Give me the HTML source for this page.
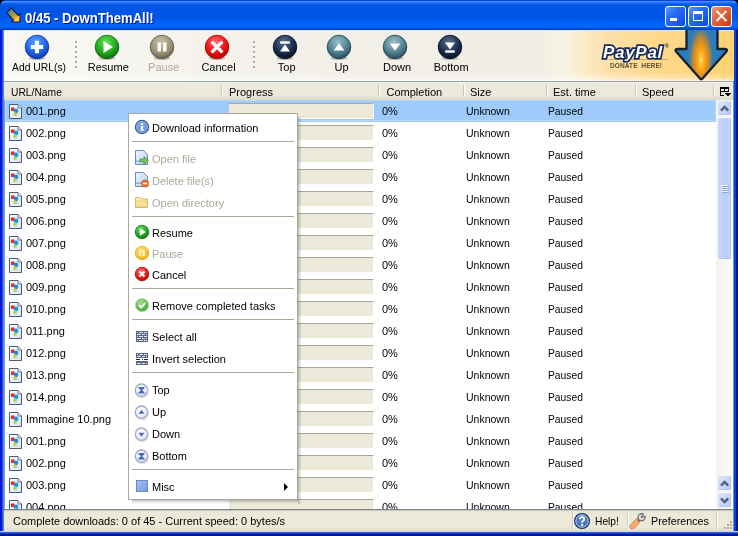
<!DOCTYPE html>
<html><head><meta charset="utf-8">
<style>
*{margin:0;padding:0;box-sizing:border-box}
html,body{width:738px;height:536px;overflow:hidden;background:#000818}
body{position:relative;will-change:transform;font-family:"Liberation Sans",sans-serif;font-size:11px;color:#000;line-height:13px}
.a{position:absolute}
svg{position:absolute;overflow:visible}
#title{left:0;top:0;width:738px;height:30px;border-radius:6px 6px 0 0;
 background:linear-gradient(#0A46D8 0px,#0A46D8 1px,#3C8CFF 1px,#3A88FC 2px,#1C6EF2 3px,#0A5CE8 4px,#0055E5 6px,#0054E3 12px,#0058EA 18px,#0062F8 23px,#0066FE 26px,#005AEE 28px,#0044CC 29px,#003AB8 30px)}
#ttext{left:25px;top:10px;color:#fff;font-weight:bold;font-size:14px;line-height:16px;transform:scaleX(0.935);transform-origin:0 0;white-space:nowrap;text-shadow:1px 1px 0 #0A1883}
#lb{left:0;top:30px;width:4px;height:506px;background:linear-gradient(90deg,#0018D0 0,#0018D0 2px,#2458F8 2px,#2458F8 3px,#5A80C8 3px)}
#rb{left:733px;top:30px;width:5px;height:506px;background:linear-gradient(90deg,#7090C8 0,#7090C8 1px,#0840D8 1px,#0840D8 3px,#001890 3px)}
#bb{left:0;top:531px;width:738px;height:5px;background:linear-gradient(#C8D4F0 0,#C8D4F0 1px,#3060D0 1px,#3060D0 2px,#0840D8 2px,#0840D8 3px,#001890 3px)}
#toolbar{left:4px;top:30px;width:730px;height:51px;background:linear-gradient(90deg,#F9F8F3 0px,#F2F0E8 300px,#EFEDE4 536px,#F8F4E4 561px,#FBE8C0 586px,#FCDFA8 606px,#FFD98C 650px,#FFD47C 700px,#FFD070 730px)}
#tbshade{left:4px;top:72px;width:729px;height:9px;background:linear-gradient(rgba(255,255,255,0),rgba(255,255,255,0.35) 7px,rgba(255,255,255,0.7) 8px)}
#tbline{left:4px;top:81px;width:729px;height:1px;background:#97A0A8}
.tl{top:61px;white-space:nowrap;text-align:center;width:80px;margin-left:-40px}
.dis{color:#ACA899}
.sep{left:0;top:41px;width:2px;height:28px;background:repeating-linear-gradient(#A8A8A4 0 2px,#FFFFFF 2px 3px,transparent 3px 5px)}
#header{left:4px;top:82px;width:729px;height:18px;background:linear-gradient(#F2F3EA 0,#F2F3EA 1px,#EBE9DB 1px,#EBE9DB 13px,#E6E3D3 15px,#E0DCCB 17px,#DCD8C6 18px)}
.hs{top:85px;width:2px;height:11px;border-left:1px solid #C7C5B2;border-right:1px solid #fff}
.ht{top:86px;white-space:nowrap}
#tree{left:4px;top:100px;width:712px;height:409px;background:#fff;overflow:hidden;border-left:1px solid #7F9DB9}
.row{position:absolute;left:0;width:712px;height:22px}
.row .t{position:absolute;top:5px;white-space:nowrap}
.sel{background:#9FCBFA}
.foc{position:absolute;left:0;top:0;width:711px;height:21px;border:1px dotted rgba(255,255,255,0.5)}
.pb{position:absolute;left:224px;top:3px;width:145px;height:16px;background:#ECE9D8;border-top:1px solid #ACA899;border-right:1px solid #fff;border-bottom:1px solid #fff}
#status{left:4px;top:509px;width:729px;height:22px;background:linear-gradient(#7A8288 0,#7A8288 1px,#C8C8BE 1px,#C8C8BE 2px,#E8E6D8 2px,#ECE9D8 6px,#ECE9D8 18px,#E2DDC6 22px)}
#sbar{left:716px;top:100px;width:17px;height:409px;background:linear-gradient(90deg,#F3F1EC,#FEFEFB)}
.sbtn{position:absolute;left:718px;width:13px;border-radius:2px;background:linear-gradient(135deg,#DCE6FE,#C6D5FB 60%,#B9CAF6);box-shadow:inset -1px -1px 0 #B0C2EE, 0 0 0 1px #F6F8FE}
#menu{left:128px;top:113px;width:170px;height:387px;background:#fff;border:1px solid #ACA899}
.msh{background:rgba(0,0,0,0.14)}
.mi{left:152px;white-space:nowrap}
.ms{left:132px;width:162px;height:1px;background:#ACA899}
.wb{position:absolute;top:6px;width:21px;height:21px;border:1px solid #fff;border-radius:3px}
</style></head><body>
<div id="title" class="a"></div>
<svg style="left:0;top:0" width="30" height="30" viewBox="0 0 30 30">
<defs><linearGradient id="tig" gradientUnits="userSpaceOnUse" x1="8" y1="10" x2="19" y2="21"><stop offset="0" stop-color="#2E86B8"/><stop offset="0.45" stop-color="#A89A48"/><stop offset="0.7" stop-color="#F4A020"/><stop offset="0.85" stop-color="#FFD060"/><stop offset="1" stop-color="#F8A830"/></linearGradient></defs>
<path d="M11.33 8.07 L18.13 15.47 L20 13.6 L20 22 L11.6 22 L13.47 20.13 L6.67 12.73 Z" fill="url(#tig)" stroke="#0A1E48" stroke-width="1.1" stroke-linejoin="miter"/>
</svg>
<div class="wb" style="left:665px;background:linear-gradient(135deg,#5A9AFF 0%,#2A6EF8 35%,#1A5AF0 70%,#1048D8 100%)"></div>
<div class="a" style="left:670px;top:18px;width:7px;height:3px;background:#fff"></div>
<div class="wb" style="left:688px;background:linear-gradient(135deg,#5A9AFF 0%,#2A6EF8 35%,#1A5AF0 70%,#1048D8 100%)"></div>
<div class="a" style="left:693px;top:11px;width:10px;height:10px;border:1px solid #fff;border-top-width:3px"></div>
<div class="wb" style="left:711px;background:linear-gradient(135deg,#F09878 0%,#E06840 40%,#D04E20 75%,#B83A10 100%)"></div>
<svg style="left:715px;top:10px" width="13" height="12" viewBox="0 0 13 12"><path d="M1.5 1 L11.5 11 M11.5 1 L1.5 11" stroke="#fff" stroke-width="1.8"/></svg>
<div id="ttext" class="a">0/45 - DownThemAll!</div>
<div id="lb" class="a"></div>
<div id="rb" class="a"></div>
<div id="toolbar" class="a"></div>
<div id="tbshade" class="a"></div>
<div class="a" style="left:4px;top:30px;width:729px;height:1px;background:#E4EAF6"></div>
<div class="a" style="left:603px;top:43px;font:italic bold 17px/20px 'Liberation Sans',sans-serif;color:#fff;-webkit-text-stroke:3.4px #15285A;paint-order:stroke fill;letter-spacing:0.7px;white-space:nowrap">PayPal</div>
<div class="a" style="left:665px;top:43px;font:bold 5px/6px 'Liberation Sans',sans-serif;color:#15285A">®</div>
<div class="a" style="left:609px;top:59px;width:59px;height:1px;background:rgba(120,100,60,0.4)"></div>
<div class="a" style="left:610px;top:62px;font:bold 6.5px/8px 'Liberation Sans',sans-serif;color:#5E5036;white-space:nowrap;letter-spacing:0.1px">DONATE&nbsp; HERE!</div>
<svg style="left:670px;top:30px;overflow:hidden" width="63" height="51" viewBox="0 0 63 51">
<defs><radialGradient id="arr" cx="31" cy="30" r="40" gradientUnits="userSpaceOnUse" gradientTransform="translate(31 30) scale(0.36 1) translate(-31 -30)">
<stop offset="0" stop-color="#FFF8B0"/><stop offset="0.08" stop-color="#FFC838"/><stop offset="0.3" stop-color="#F89C14"/><stop offset="0.55" stop-color="#C08A30"/><stop offset="0.8" stop-color="#3C7CA8"/><stop offset="1" stop-color="#2A7CC0"/></radialGradient></defs>
<path d="M16.5 -3 H47.5 V19 H55 Q58.5 19 56 22 L32.5 48.5 Q31.2 50 30 48.5 L6.5 22 Q4 19 7.5 19 H16.5 Z" fill="url(#arr)" stroke="#15202A" stroke-width="2.3" stroke-linejoin="round"/>
</svg>
<div class="a sep" style="left:74.5px"></div>
<div class="a sep" style="left:253px"></div>
<svg style="left:22.5px;top:32.5px" width="28" height="28" viewBox="0 0 28 28">
<defs><radialGradient id="gadd" cx="0.45" cy="0.3" r="0.75"><stop offset="0" stop-color="#5AA8FF"/><stop offset="0.6" stop-color="#1E64E6"/><stop offset="1" stop-color="#0A2E9C"/></radialGradient></defs>
<ellipse cx="14" cy="25.3" rx="8.5" ry="1.8" fill="rgba(0,0,0,0.22)"/><circle cx="14" cy="14" r="11.8" fill="url(#gadd)" stroke="#0A2E9C" stroke-width="0.8"/>
<path d="M12 7.8h4v4.2h4.2v4h-4.2v4.2h-4v-4.2h-4.2v-4h4.2z" fill="#fff"/></svg>
<svg style="left:93px;top:32.5px" width="28" height="28" viewBox="0 0 28 28">
<defs><radialGradient id="gres" cx="0.45" cy="0.3" r="0.75"><stop offset="0" stop-color="#62E25A"/><stop offset="0.6" stop-color="#1FA91B"/><stop offset="1" stop-color="#0C5E0A"/></radialGradient></defs>
<ellipse cx="14" cy="25.3" rx="8.5" ry="1.8" fill="rgba(0,0,0,0.22)"/><circle cx="14" cy="14" r="11.8" fill="url(#gres)" stroke="#0C5E0A" stroke-width="0.8"/>
<path d="M10.5 8 L20 14 L10.5 20 Z" fill="#fff"/></svg>
<svg style="left:148px;top:32.5px" width="28" height="28" viewBox="0 0 28 28">
<defs><radialGradient id="gpau" cx="0.45" cy="0.3" r="0.75"><stop offset="0" stop-color="#C9C0A8"/><stop offset="0.6" stop-color="#9C927A"/><stop offset="1" stop-color="#5E5644"/></radialGradient></defs>
<ellipse cx="14" cy="25.3" rx="8.5" ry="1.8" fill="rgba(0,0,0,0.22)"/><circle cx="14" cy="14" r="11.8" fill="url(#gpau)" stroke="#5E5644" stroke-width="0.8"/>
<rect x="9.6" y="9.5" width="3.3" height="9" fill="#fff"/><rect x="15.1" y="9.5" width="3.3" height="9" fill="#fff"/></svg>
<svg style="left:203px;top:32.5px" width="28" height="28" viewBox="0 0 28 28">
<defs><radialGradient id="gcan" cx="0.45" cy="0.3" r="0.75"><stop offset="0" stop-color="#FF7070"/><stop offset="0.6" stop-color="#F01010"/><stop offset="1" stop-color="#A00000"/></radialGradient></defs>
<ellipse cx="14" cy="25.3" rx="8.5" ry="1.8" fill="rgba(0,0,0,0.22)"/><circle cx="14" cy="14" r="11.8" fill="url(#gcan)" stroke="#A00000" stroke-width="0.8"/>
<path d="M6.4 14 L21.6 14 M14 6.4 L14 21.6" stroke="#fff" stroke-width="3.2" transform="rotate(45 14 14)"/></svg>
<svg style="left:270.6px;top:32.5px" width="28" height="28" viewBox="0 0 28 28">
<defs><radialGradient id="gtop" cx="0.45" cy="0.3" r="0.75"><stop offset="0" stop-color="#5C7090"/><stop offset="0.6" stop-color="#1A2C4C"/><stop offset="1" stop-color="#050D1E"/></radialGradient></defs>
<ellipse cx="14" cy="25.3" rx="8.5" ry="1.8" fill="rgba(0,0,0,0.22)"/><circle cx="14" cy="14" r="11.8" fill="url(#gtop)" stroke="#050D1E" stroke-width="0.8"/>
<rect x="9.2" y="8.3" width="9.6" height="2.4" fill="#fff"/><path d="M14 11.5 L19 18.5 L9 18.5 Z" fill="#fff"/></svg>
<svg style="left:325.3px;top:32.5px" width="28" height="28" viewBox="0 0 28 28">
<defs><radialGradient id="gup" cx="0.45" cy="0.3" r="0.75"><stop offset="0" stop-color="#9CC0C8"/><stop offset="0.6" stop-color="#4F8090"/><stop offset="1" stop-color="#1E3C48"/></radialGradient></defs>
<ellipse cx="14" cy="25.3" rx="8.5" ry="1.8" fill="rgba(0,0,0,0.22)"/><circle cx="14" cy="14" r="11.8" fill="url(#gup)" stroke="#1E3C48" stroke-width="0.8"/>
<path d="M14 10.3 L19.3 17.5 L8.7 17.5 Z" fill="#fff"/></svg>
<svg style="left:380.8px;top:32.5px" width="28" height="28" viewBox="0 0 28 28">
<defs><radialGradient id="gdn" cx="0.45" cy="0.3" r="0.75"><stop offset="0" stop-color="#9CC0C8"/><stop offset="0.6" stop-color="#4F8090"/><stop offset="1" stop-color="#1E3C48"/></radialGradient></defs>
<ellipse cx="14" cy="25.3" rx="8.5" ry="1.8" fill="rgba(0,0,0,0.22)"/><circle cx="14" cy="14" r="11.8" fill="url(#gdn)" stroke="#1E3C48" stroke-width="0.8"/>
<path d="M14 17.7 L19.3 10.5 L8.7 10.5 Z" fill="#fff"/></svg>
<svg style="left:435.7px;top:32.5px" width="28" height="28" viewBox="0 0 28 28">
<defs><radialGradient id="gbot" cx="0.45" cy="0.3" r="0.75"><stop offset="0" stop-color="#5C7090"/><stop offset="0.6" stop-color="#1A2C4C"/><stop offset="1" stop-color="#050D1E"/></radialGradient></defs>
<ellipse cx="14" cy="25.3" rx="8.5" ry="1.8" fill="rgba(0,0,0,0.22)"/><circle cx="14" cy="14" r="11.8" fill="url(#gbot)" stroke="#050D1E" stroke-width="0.8"/>
<path d="M9 9.5 L19 9.5 L14 16.5 Z" fill="#fff"/><rect x="9.2" y="17.3" width="9.6" height="2.4" fill="#fff"/></svg>
<div class="a tl " style="left:38.7px;transform:scaleX(0.94)">Add URL(s)</div>
<div class="a tl " style="left:108.3px">Resume</div>
<div class="a tl dis" style="left:163.7px">Pause</div>
<div class="a tl " style="left:218.5px">Cancel</div>
<div class="a tl " style="left:286.7px">Top</div>
<div class="a tl " style="left:341.5px">Up</div>
<div class="a tl " style="left:397px">Down</div>
<div class="a tl " style="left:451.2px">Bottom</div>
<div id="tbline" class="a"></div>
<div id="header" class="a"></div>
<div class="a hs" style="left:221px"></div>
<div class="a hs" style="left:378px"></div>
<div class="a hs" style="left:463px"></div>
<div class="a hs" style="left:546px"></div>
<div class="a hs" style="left:635px"></div>
<div class="a hs" style="left:713px"></div>
<div class="a ht" style="left:11px;transform:scaleX(0.935);transform-origin:0 0">URL/Name</div>
<div class="a ht" style="left:229px">Progress</div>
<div class="a ht" style="left:386.5px">Completion</div>
<div class="a ht" style="left:470px">Size</div>
<div class="a ht" style="left:553px">Est. time</div>
<div class="a ht" style="left:642px">Speed</div>
<svg style="left:720px;top:87px" width="11" height="10" viewBox="0 0 11 10" shape-rendering="crispEdges"><g fill="#000"><rect x="0" y="0" width="9" height="2"/><rect x="0" y="4" width="9" height="1"/><rect x="0" y="0" width="1" height="9"/><rect x="8" y="0" width="1" height="5"/><rect x="4" y="0" width="1" height="5"/><rect x="0" y="8" width="4" height="1"/><rect x="5" y="6" width="6" height="1"/><rect x="6" y="7" width="4" height="1"/><rect x="7" y="8" width="2" height="1"/></g></svg>
<svg width="0" height="0" style="left:0;top:0"><defs><linearGradient id="fg" x1="0" y1="0" x2="1" y2="1"><stop offset="0" stop-color="#fff"/><stop offset="1" stop-color="#D8E0F0"/></linearGradient></defs></svg>
<div id="tree" class="a">
<div class="row sel" style="top:0px"><div class="foc"></div><div class="pb"></div><div class="t" style="left:21px">001.png</div><div class="t" style="left:377px">0%</div><div class="t" style="left:461px;transform:scaleX(0.955);transform-origin:0 0">Unknown</div><div class="t" style="left:543px;transform:scaleX(0.935);transform-origin:0 0">Paused</div></div>
<div class="row" style="top:22px"><div class="pb"></div><div class="t" style="left:21px">002.png</div><div class="t" style="left:377px">0%</div><div class="t" style="left:461px;transform:scaleX(0.955);transform-origin:0 0">Unknown</div><div class="t" style="left:543px;transform:scaleX(0.935);transform-origin:0 0">Paused</div></div>
<div class="row" style="top:44px"><div class="pb"></div><div class="t" style="left:21px">003.png</div><div class="t" style="left:377px">0%</div><div class="t" style="left:461px;transform:scaleX(0.955);transform-origin:0 0">Unknown</div><div class="t" style="left:543px;transform:scaleX(0.935);transform-origin:0 0">Paused</div></div>
<div class="row" style="top:66px"><div class="pb"></div><div class="t" style="left:21px">004.png</div><div class="t" style="left:377px">0%</div><div class="t" style="left:461px;transform:scaleX(0.955);transform-origin:0 0">Unknown</div><div class="t" style="left:543px;transform:scaleX(0.935);transform-origin:0 0">Paused</div></div>
<div class="row" style="top:88px"><div class="pb"></div><div class="t" style="left:21px">005.png</div><div class="t" style="left:377px">0%</div><div class="t" style="left:461px;transform:scaleX(0.955);transform-origin:0 0">Unknown</div><div class="t" style="left:543px;transform:scaleX(0.935);transform-origin:0 0">Paused</div></div>
<div class="row" style="top:110px"><div class="pb"></div><div class="t" style="left:21px">006.png</div><div class="t" style="left:377px">0%</div><div class="t" style="left:461px;transform:scaleX(0.955);transform-origin:0 0">Unknown</div><div class="t" style="left:543px;transform:scaleX(0.935);transform-origin:0 0">Paused</div></div>
<div class="row" style="top:132px"><div class="pb"></div><div class="t" style="left:21px">007.png</div><div class="t" style="left:377px">0%</div><div class="t" style="left:461px;transform:scaleX(0.955);transform-origin:0 0">Unknown</div><div class="t" style="left:543px;transform:scaleX(0.935);transform-origin:0 0">Paused</div></div>
<div class="row" style="top:154px"><div class="pb"></div><div class="t" style="left:21px">008.png</div><div class="t" style="left:377px">0%</div><div class="t" style="left:461px;transform:scaleX(0.955);transform-origin:0 0">Unknown</div><div class="t" style="left:543px;transform:scaleX(0.935);transform-origin:0 0">Paused</div></div>
<div class="row" style="top:176px"><div class="pb"></div><div class="t" style="left:21px">009.png</div><div class="t" style="left:377px">0%</div><div class="t" style="left:461px;transform:scaleX(0.955);transform-origin:0 0">Unknown</div><div class="t" style="left:543px;transform:scaleX(0.935);transform-origin:0 0">Paused</div></div>
<div class="row" style="top:198px"><div class="pb"></div><div class="t" style="left:21px">010.png</div><div class="t" style="left:377px">0%</div><div class="t" style="left:461px;transform:scaleX(0.955);transform-origin:0 0">Unknown</div><div class="t" style="left:543px;transform:scaleX(0.935);transform-origin:0 0">Paused</div></div>
<div class="row" style="top:220px"><div class="pb"></div><div class="t" style="left:21px">011.png</div><div class="t" style="left:377px">0%</div><div class="t" style="left:461px;transform:scaleX(0.955);transform-origin:0 0">Unknown</div><div class="t" style="left:543px;transform:scaleX(0.935);transform-origin:0 0">Paused</div></div>
<div class="row" style="top:242px"><div class="pb"></div><div class="t" style="left:21px">012.png</div><div class="t" style="left:377px">0%</div><div class="t" style="left:461px;transform:scaleX(0.955);transform-origin:0 0">Unknown</div><div class="t" style="left:543px;transform:scaleX(0.935);transform-origin:0 0">Paused</div></div>
<div class="row" style="top:264px"><div class="pb"></div><div class="t" style="left:21px">013.png</div><div class="t" style="left:377px">0%</div><div class="t" style="left:461px;transform:scaleX(0.955);transform-origin:0 0">Unknown</div><div class="t" style="left:543px;transform:scaleX(0.935);transform-origin:0 0">Paused</div></div>
<div class="row" style="top:286px"><div class="pb"></div><div class="t" style="left:21px">014.png</div><div class="t" style="left:377px">0%</div><div class="t" style="left:461px;transform:scaleX(0.955);transform-origin:0 0">Unknown</div><div class="t" style="left:543px;transform:scaleX(0.935);transform-origin:0 0">Paused</div></div>
<div class="row" style="top:308px"><div class="pb"></div><div class="t" style="left:21px">Immagine 10.png</div><div class="t" style="left:377px">0%</div><div class="t" style="left:461px;transform:scaleX(0.955);transform-origin:0 0">Unknown</div><div class="t" style="left:543px;transform:scaleX(0.935);transform-origin:0 0">Paused</div></div>
<div class="row" style="top:330px"><div class="pb"></div><div class="t" style="left:21px">001.png</div><div class="t" style="left:377px">0%</div><div class="t" style="left:461px;transform:scaleX(0.955);transform-origin:0 0">Unknown</div><div class="t" style="left:543px;transform:scaleX(0.935);transform-origin:0 0">Paused</div></div>
<div class="row" style="top:352px"><div class="pb"></div><div class="t" style="left:21px">002.png</div><div class="t" style="left:377px">0%</div><div class="t" style="left:461px;transform:scaleX(0.955);transform-origin:0 0">Unknown</div><div class="t" style="left:543px;transform:scaleX(0.935);transform-origin:0 0">Paused</div></div>
<div class="row" style="top:374px"><div class="pb"></div><div class="t" style="left:21px">003.png</div><div class="t" style="left:377px">0%</div><div class="t" style="left:461px;transform:scaleX(0.955);transform-origin:0 0">Unknown</div><div class="t" style="left:543px;transform:scaleX(0.935);transform-origin:0 0">Paused</div></div>
<div class="row" style="top:396px"><div class="pb"></div><div class="t" style="left:21px">004.png</div><div class="t" style="left:377px">0%</div><div class="t" style="left:461px;transform:scaleX(0.955);transform-origin:0 0">Unknown</div><div class="t" style="left:543px;transform:scaleX(0.935);transform-origin:0 0">Paused</div></div>
</div>
<svg style="left:9px;top:104px" width="14" height="16" viewBox="0 0 14 16">
<path d="M0.5 0.5 H9 L12.5 4 V14.5 H0.5 Z" fill="url(#fg)" stroke="#4A5A7A" stroke-width="1"/><path d="M9 0.5 V4 H12.5" fill="#E8EEF8" stroke="#4A5A7A" stroke-width="0.8"/>
<rect x="2" y="3.5" width="3.5" height="3.5" fill="#E03020"/>
<circle cx="7" cy="7" r="2.4" fill="#1E90E8"/>
<circle cx="6.2" cy="10.2" r="1.9" fill="#B0D848"/>
</svg>
<svg style="left:9px;top:126px" width="14" height="16" viewBox="0 0 14 16">
<path d="M0.5 0.5 H9 L12.5 4 V14.5 H0.5 Z" fill="url(#fg)" stroke="#4A5A7A" stroke-width="1"/><path d="M9 0.5 V4 H12.5" fill="#E8EEF8" stroke="#4A5A7A" stroke-width="0.8"/>
<rect x="2" y="3.5" width="3.5" height="3.5" fill="#E03020"/>
<circle cx="7" cy="7" r="2.4" fill="#1E90E8"/>
<circle cx="6.2" cy="10.2" r="1.9" fill="#B0D848"/>
</svg>
<svg style="left:9px;top:148px" width="14" height="16" viewBox="0 0 14 16">
<path d="M0.5 0.5 H9 L12.5 4 V14.5 H0.5 Z" fill="url(#fg)" stroke="#4A5A7A" stroke-width="1"/><path d="M9 0.5 V4 H12.5" fill="#E8EEF8" stroke="#4A5A7A" stroke-width="0.8"/>
<rect x="2" y="3.5" width="3.5" height="3.5" fill="#E03020"/>
<circle cx="7" cy="7" r="2.4" fill="#1E90E8"/>
<circle cx="6.2" cy="10.2" r="1.9" fill="#B0D848"/>
</svg>
<svg style="left:9px;top:170px" width="14" height="16" viewBox="0 0 14 16">
<path d="M0.5 0.5 H9 L12.5 4 V14.5 H0.5 Z" fill="url(#fg)" stroke="#4A5A7A" stroke-width="1"/><path d="M9 0.5 V4 H12.5" fill="#E8EEF8" stroke="#4A5A7A" stroke-width="0.8"/>
<rect x="2" y="3.5" width="3.5" height="3.5" fill="#E03020"/>
<circle cx="7" cy="7" r="2.4" fill="#1E90E8"/>
<circle cx="6.2" cy="10.2" r="1.9" fill="#B0D848"/>
</svg>
<svg style="left:9px;top:192px" width="14" height="16" viewBox="0 0 14 16">
<path d="M0.5 0.5 H9 L12.5 4 V14.5 H0.5 Z" fill="url(#fg)" stroke="#4A5A7A" stroke-width="1"/><path d="M9 0.5 V4 H12.5" fill="#E8EEF8" stroke="#4A5A7A" stroke-width="0.8"/>
<rect x="2" y="3.5" width="3.5" height="3.5" fill="#E03020"/>
<circle cx="7" cy="7" r="2.4" fill="#1E90E8"/>
<circle cx="6.2" cy="10.2" r="1.9" fill="#B0D848"/>
</svg>
<svg style="left:9px;top:214px" width="14" height="16" viewBox="0 0 14 16">
<path d="M0.5 0.5 H9 L12.5 4 V14.5 H0.5 Z" fill="url(#fg)" stroke="#4A5A7A" stroke-width="1"/><path d="M9 0.5 V4 H12.5" fill="#E8EEF8" stroke="#4A5A7A" stroke-width="0.8"/>
<rect x="2" y="3.5" width="3.5" height="3.5" fill="#E03020"/>
<circle cx="7" cy="7" r="2.4" fill="#1E90E8"/>
<circle cx="6.2" cy="10.2" r="1.9" fill="#B0D848"/>
</svg>
<svg style="left:9px;top:236px" width="14" height="16" viewBox="0 0 14 16">
<path d="M0.5 0.5 H9 L12.5 4 V14.5 H0.5 Z" fill="url(#fg)" stroke="#4A5A7A" stroke-width="1"/><path d="M9 0.5 V4 H12.5" fill="#E8EEF8" stroke="#4A5A7A" stroke-width="0.8"/>
<rect x="2" y="3.5" width="3.5" height="3.5" fill="#E03020"/>
<circle cx="7" cy="7" r="2.4" fill="#1E90E8"/>
<circle cx="6.2" cy="10.2" r="1.9" fill="#B0D848"/>
</svg>
<svg style="left:9px;top:258px" width="14" height="16" viewBox="0 0 14 16">
<path d="M0.5 0.5 H9 L12.5 4 V14.5 H0.5 Z" fill="url(#fg)" stroke="#4A5A7A" stroke-width="1"/><path d="M9 0.5 V4 H12.5" fill="#E8EEF8" stroke="#4A5A7A" stroke-width="0.8"/>
<rect x="2" y="3.5" width="3.5" height="3.5" fill="#E03020"/>
<circle cx="7" cy="7" r="2.4" fill="#1E90E8"/>
<circle cx="6.2" cy="10.2" r="1.9" fill="#B0D848"/>
</svg>
<svg style="left:9px;top:280px" width="14" height="16" viewBox="0 0 14 16">
<path d="M0.5 0.5 H9 L12.5 4 V14.5 H0.5 Z" fill="url(#fg)" stroke="#4A5A7A" stroke-width="1"/><path d="M9 0.5 V4 H12.5" fill="#E8EEF8" stroke="#4A5A7A" stroke-width="0.8"/>
<rect x="2" y="3.5" width="3.5" height="3.5" fill="#E03020"/>
<circle cx="7" cy="7" r="2.4" fill="#1E90E8"/>
<circle cx="6.2" cy="10.2" r="1.9" fill="#B0D848"/>
</svg>
<svg style="left:9px;top:302px" width="14" height="16" viewBox="0 0 14 16">
<path d="M0.5 0.5 H9 L12.5 4 V14.5 H0.5 Z" fill="url(#fg)" stroke="#4A5A7A" stroke-width="1"/><path d="M9 0.5 V4 H12.5" fill="#E8EEF8" stroke="#4A5A7A" stroke-width="0.8"/>
<rect x="2" y="3.5" width="3.5" height="3.5" fill="#E03020"/>
<circle cx="7" cy="7" r="2.4" fill="#1E90E8"/>
<circle cx="6.2" cy="10.2" r="1.9" fill="#B0D848"/>
</svg>
<svg style="left:9px;top:324px" width="14" height="16" viewBox="0 0 14 16">
<path d="M0.5 0.5 H9 L12.5 4 V14.5 H0.5 Z" fill="url(#fg)" stroke="#4A5A7A" stroke-width="1"/><path d="M9 0.5 V4 H12.5" fill="#E8EEF8" stroke="#4A5A7A" stroke-width="0.8"/>
<rect x="2" y="3.5" width="3.5" height="3.5" fill="#E03020"/>
<circle cx="7" cy="7" r="2.4" fill="#1E90E8"/>
<circle cx="6.2" cy="10.2" r="1.9" fill="#B0D848"/>
</svg>
<svg style="left:9px;top:346px" width="14" height="16" viewBox="0 0 14 16">
<path d="M0.5 0.5 H9 L12.5 4 V14.5 H0.5 Z" fill="url(#fg)" stroke="#4A5A7A" stroke-width="1"/><path d="M9 0.5 V4 H12.5" fill="#E8EEF8" stroke="#4A5A7A" stroke-width="0.8"/>
<rect x="2" y="3.5" width="3.5" height="3.5" fill="#E03020"/>
<circle cx="7" cy="7" r="2.4" fill="#1E90E8"/>
<circle cx="6.2" cy="10.2" r="1.9" fill="#B0D848"/>
</svg>
<svg style="left:9px;top:368px" width="14" height="16" viewBox="0 0 14 16">
<path d="M0.5 0.5 H9 L12.5 4 V14.5 H0.5 Z" fill="url(#fg)" stroke="#4A5A7A" stroke-width="1"/><path d="M9 0.5 V4 H12.5" fill="#E8EEF8" stroke="#4A5A7A" stroke-width="0.8"/>
<rect x="2" y="3.5" width="3.5" height="3.5" fill="#E03020"/>
<circle cx="7" cy="7" r="2.4" fill="#1E90E8"/>
<circle cx="6.2" cy="10.2" r="1.9" fill="#B0D848"/>
</svg>
<svg style="left:9px;top:390px" width="14" height="16" viewBox="0 0 14 16">
<path d="M0.5 0.5 H9 L12.5 4 V14.5 H0.5 Z" fill="url(#fg)" stroke="#4A5A7A" stroke-width="1"/><path d="M9 0.5 V4 H12.5" fill="#E8EEF8" stroke="#4A5A7A" stroke-width="0.8"/>
<rect x="2" y="3.5" width="3.5" height="3.5" fill="#E03020"/>
<circle cx="7" cy="7" r="2.4" fill="#1E90E8"/>
<circle cx="6.2" cy="10.2" r="1.9" fill="#B0D848"/>
</svg>
<svg style="left:9px;top:412px" width="14" height="16" viewBox="0 0 14 16">
<path d="M0.5 0.5 H9 L12.5 4 V14.5 H0.5 Z" fill="url(#fg)" stroke="#4A5A7A" stroke-width="1"/><path d="M9 0.5 V4 H12.5" fill="#E8EEF8" stroke="#4A5A7A" stroke-width="0.8"/>
<rect x="2" y="3.5" width="3.5" height="3.5" fill="#E03020"/>
<circle cx="7" cy="7" r="2.4" fill="#1E90E8"/>
<circle cx="6.2" cy="10.2" r="1.9" fill="#B0D848"/>
</svg>
<svg style="left:9px;top:434px" width="14" height="16" viewBox="0 0 14 16">
<path d="M0.5 0.5 H9 L12.5 4 V14.5 H0.5 Z" fill="url(#fg)" stroke="#4A5A7A" stroke-width="1"/><path d="M9 0.5 V4 H12.5" fill="#E8EEF8" stroke="#4A5A7A" stroke-width="0.8"/>
<rect x="2" y="3.5" width="3.5" height="3.5" fill="#E03020"/>
<circle cx="7" cy="7" r="2.4" fill="#1E90E8"/>
<circle cx="6.2" cy="10.2" r="1.9" fill="#B0D848"/>
</svg>
<svg style="left:9px;top:456px" width="14" height="16" viewBox="0 0 14 16">
<path d="M0.5 0.5 H9 L12.5 4 V14.5 H0.5 Z" fill="url(#fg)" stroke="#4A5A7A" stroke-width="1"/><path d="M9 0.5 V4 H12.5" fill="#E8EEF8" stroke="#4A5A7A" stroke-width="0.8"/>
<rect x="2" y="3.5" width="3.5" height="3.5" fill="#E03020"/>
<circle cx="7" cy="7" r="2.4" fill="#1E90E8"/>
<circle cx="6.2" cy="10.2" r="1.9" fill="#B0D848"/>
</svg>
<svg style="left:9px;top:478px" width="14" height="16" viewBox="0 0 14 16">
<path d="M0.5 0.5 H9 L12.5 4 V14.5 H0.5 Z" fill="url(#fg)" stroke="#4A5A7A" stroke-width="1"/><path d="M9 0.5 V4 H12.5" fill="#E8EEF8" stroke="#4A5A7A" stroke-width="0.8"/>
<rect x="2" y="3.5" width="3.5" height="3.5" fill="#E03020"/>
<circle cx="7" cy="7" r="2.4" fill="#1E90E8"/>
<circle cx="6.2" cy="10.2" r="1.9" fill="#B0D848"/>
</svg>
<svg style="left:9px;top:500px" width="14" height="16" viewBox="0 0 14 16">
<path d="M0.5 0.5 H9 L12.5 4 V14.5 H0.5 Z" fill="url(#fg)" stroke="#4A5A7A" stroke-width="1"/><path d="M9 0.5 V4 H12.5" fill="#E8EEF8" stroke="#4A5A7A" stroke-width="0.8"/>
<rect x="2" y="3.5" width="3.5" height="3.5" fill="#E03020"/>
<circle cx="7" cy="7" r="2.4" fill="#1E90E8"/>
<circle cx="6.2" cy="10.2" r="1.9" fill="#B0D848"/>
</svg>
<div id="sbar" class="a"></div>
<div class="sbtn" style="top:101px;height:14px"></div><svg style="left:720px;top:105px" width="10" height="7"><path d="M1 5.6 L4.6 2 L8.2 5.6" fill="none" stroke="#4D6185" stroke-width="2.4"/></svg>
<div class="sbtn" style="top:118px;height:141px;background:linear-gradient(90deg,#C9D8FC,#BCCEFA 50%,#C4D4FB)"></div><div class="a" style="left:721px;top:185px;width:7px;height:1px;background:#F2F6FE;box-shadow:1px 1px 0 #8FA6DC"></div><div class="a" style="left:721px;top:187px;width:7px;height:1px;background:#F2F6FE;box-shadow:1px 1px 0 #8FA6DC"></div><div class="a" style="left:721px;top:189px;width:7px;height:1px;background:#F2F6FE;box-shadow:1px 1px 0 #8FA6DC"></div><div class="a" style="left:721px;top:191px;width:7px;height:1px;background:#F2F6FE;box-shadow:1px 1px 0 #8FA6DC"></div>
<div class="sbtn" style="top:476px;height:14px"></div><svg style="left:720px;top:480px" width="10" height="7"><path d="M1 5.6 L4.6 2 L8.2 5.6" fill="none" stroke="#4D6185" stroke-width="2.4"/></svg>
<div class="sbtn" style="top:493px;height:14px"></div><svg style="left:720px;top:497px" width="10" height="7"><path d="M1 1.4 L4.6 5 L8.2 1.4" fill="none" stroke="#4D6185" stroke-width="2.4"/></svg>
<div class="a" style="left:298px;top:117px;width:4px;height:387px;background:linear-gradient(90deg,rgba(0,0,0,0.28),rgba(0,0,0,0.16) 1px,rgba(0,0,0,0.07) 2.5px,rgba(0,0,0,0) 4px)"></div>
<div class="a" style="left:132px;top:500px;width:166px;height:4px;background:linear-gradient(rgba(0,0,0,0.28),rgba(0,0,0,0.16) 1px,rgba(0,0,0,0.07) 2.5px,rgba(0,0,0,0) 4px)"></div>
<div id="menu" class="a"></div>
<div class="a mi " style="top:122px">Download information</div>
<div class="a mi dis" style="top:153px">Open file</div>
<div class="a mi dis" style="top:175px">Delete file(s)</div>
<div class="a mi dis" style="top:197px">Open directory</div>
<div class="a mi " style="top:227px">Resume</div>
<div class="a mi dis" style="top:248px">Pause</div>
<div class="a mi " style="top:269px">Cancel</div>
<div class="a mi " style="top:300px">Remove completed tasks</div>
<div class="a mi " style="top:331px">Select all</div>
<div class="a mi " style="top:353px">Invert selection</div>
<div class="a mi " style="top:384px">Top</div>
<div class="a mi " style="top:406px">Up</div>
<div class="a mi " style="top:428px">Down</div>
<div class="a mi " style="top:450px">Bottom</div>
<div class="a mi " style="top:481px">Misc</div>
<div class="a ms" style="top:141px"></div>
<div class="a ms" style="top:216px"></div>
<div class="a ms" style="top:288px"></div>
<div class="a ms" style="top:319px"></div>
<div class="a ms" style="top:372px"></div>
<div class="a ms" style="top:469px"></div>
<svg style="left:284px;top:483px" width="5" height="8"><path d="M0 0 L4 4 L0 8 Z" fill="#000"/></svg>
<svg style="left:134px;top:119px" width="16" height="16" viewBox="0 0 16 16">
<defs><radialGradient id="minfo" cx="0.45" cy="0.4" r="0.7"><stop offset="0" stop-color="#8AB0E4"/><stop offset="0.8" stop-color="#5E8ACA"/><stop offset="1" stop-color="#4C78B8"/></radialGradient></defs>
<circle cx="8" cy="8" r="6.6" fill="url(#minfo)" stroke="#3A5A94" stroke-width="1.2"/>
<circle cx="8" cy="8" r="5.4" fill="none" stroke="#A8C4EC" stroke-width="0.7"/>
<circle cx="8" cy="5.2" r="1.1" fill="#fff"/><rect x="7.1" y="7" width="1.9" height="4" fill="#fff"/><rect x="6.3" y="10.6" width="3.5" height="1.1" fill="#fff"/>
</svg>
<svg style="left:135px;top:150px" width="16" height="16" viewBox="0 0 16 16">
<defs><linearGradient id="docg" x1="0" y1="0" x2="1" y2="1"><stop offset="0" stop-color="#F0F6FE"/><stop offset="1" stop-color="#B8D0F0"/></linearGradient></defs>
<path d="M0.5 0.5 H8.5 L12.5 4.5 V14.5 H0.5 Z" fill="url(#docg)" stroke="#6A8AC8"/>
<rect x="1" y="10.5" width="8" height="1.5" fill="#8AB0E8"/>
<path d="M5 9 H9 V6.5 L13.5 10.5 L9 14.5 V12 H5 Z" fill="#7CC060" stroke="#4A9A3A" stroke-width="0.8"/>
</svg>
<svg style="left:135px;top:172px" width="16" height="16" viewBox="0 0 16 16">
<path d="M0.5 0.5 H8.5 L12.5 4.5 V14.5 H0.5 Z" fill="url(#docg)" stroke="#6A8AC8"/>
<rect x="1" y="10.5" width="8" height="1.5" fill="#8AB0E8"/>
<circle cx="10" cy="11.5" r="3.6" fill="#E8702A" stroke="#C05018" stroke-width="0.6"/>
<rect x="7.8" y="10.8" width="4.4" height="1.5" fill="#fff"/>
</svg>
<svg style="left:135px;top:196px" width="16" height="14" viewBox="0 0 16 14">
<defs><linearGradient id="fold" x1="0" y1="0" x2="0" y2="1"><stop offset="0" stop-color="#FCF0C0"/><stop offset="1" stop-color="#F4D880"/></linearGradient></defs>
<path d="M0.5 1.5 H5 L6.5 3 H12.5 V11.5 H0.5 Z" fill="url(#fold)" stroke="#D8B868"/>
<path d="M0.5 5 H12.5" stroke="#E8C870" stroke-width="0.8"/>
</svg>
<svg style="left:134px;top:224px" width="16" height="16" viewBox="0 0 16 16">
<defs><radialGradient id="mres" cx="0.4" cy="0.3" r="0.8"><stop offset="0" stop-color="#70E060"/><stop offset="0.6" stop-color="#20A020"/><stop offset="1" stop-color="#107010"/></radialGradient></defs>
<circle cx="8" cy="8" r="6.8" fill="url(#mres)" stroke="#107010" stroke-width="0.8"/><path d="M5.8 4.2 L11.8 8 L5.8 11.8 Z" fill="#fff"/></svg>
<svg style="left:134px;top:245px" width="16" height="16" viewBox="0 0 16 16">
<defs><radialGradient id="mpau" cx="0.4" cy="0.3" r="0.8"><stop offset="0" stop-color="#FFE080"/><stop offset="0.6" stop-color="#F8C030"/><stop offset="1" stop-color="#E8A820"/></radialGradient></defs>
<circle cx="8" cy="8" r="6.8" fill="url(#mpau)" stroke="#E8A820" stroke-width="0.8"/><rect x="5.2" y="4.8" width="2" height="6.4" fill="#FFF4D0"/><rect x="8.8" y="4.8" width="2" height="6.4" fill="#FFF4D0"/></svg>
<svg style="left:134px;top:266px" width="16" height="16" viewBox="0 0 16 16">
<defs><radialGradient id="mcan" cx="0.4" cy="0.3" r="0.8"><stop offset="0" stop-color="#FF7070"/><stop offset="0.6" stop-color="#E81818"/><stop offset="1" stop-color="#B00000"/></radialGradient></defs>
<circle cx="8" cy="8" r="6.8" fill="url(#mcan)" stroke="#B00000" stroke-width="0.8"/><path d="M4.4 8 H11.6 M8 4.4 V11.6" stroke="#fff" stroke-width="2.1" transform="rotate(45 8 8)"/></svg>
<svg style="left:134px;top:297px" width="16" height="16" viewBox="0 0 16 16">
<defs><radialGradient id="mrem" cx="0.4" cy="0.3" r="0.8"><stop offset="0" stop-color="#A0E090"/><stop offset="0.6" stop-color="#60B850"/><stop offset="1" stop-color="#48A040"/></radialGradient></defs>
<circle cx="8" cy="8" r="6.6" fill="url(#mrem)" stroke="#A8D8A0" stroke-width="0.8"/><path d="M4.8 8 L7.2 10.4 L11.4 5.8" fill="none" stroke="#fff" stroke-width="1.8"/></svg>
<svg style="left:136px;top:331px" width="12" height="11" viewBox="0 0 12 11" shape-rendering="crispEdges"><rect x="0" y="0" width="12" height="11" fill="#5A6680"/><rect x="1" y="1" width="1" height="1" fill="#DCE4F2"/><rect x="3" y="1" width="4" height="1" fill="#DCE4F2"/><rect x="8" y="1" width="3" height="1" fill="#DCE4F2"/><rect x="1" y="3" width="4" height="1" fill="#DCE4F2"/><rect x="6" y="3" width="3" height="1" fill="#DCE4F2"/><rect x="10" y="3" width="1" height="1" fill="#DCE4F2"/><rect x="1" y="5" width="1" height="1" fill="#DCE4F2"/><rect x="3" y="5" width="4" height="1" fill="#DCE4F2"/><rect x="8" y="5" width="3" height="1" fill="#DCE4F2"/><rect x="1" y="7" width="4" height="1" fill="#DCE4F2"/><rect x="6" y="7" width="3" height="1" fill="#DCE4F2"/><rect x="10" y="7" width="1" height="1" fill="#DCE4F2"/><rect x="1" y="9" width="1" height="1" fill="#DCE4F2"/><rect x="3" y="9" width="4" height="1" fill="#DCE4F2"/><rect x="8" y="9" width="3" height="1" fill="#DCE4F2"/></svg>
<svg style="left:136px;top:353px" width="12" height="12" viewBox="0 0 12 12" shape-rendering="crispEdges"><rect x="0" y="0" width="12" height="5" fill="#5A6680"/><rect x="0" y="8" width="12" height="4" fill="#5A6680"/><rect x="1" y="1" width="1" height="1" fill="#DCE4F2"/><rect x="3" y="1" width="4" height="1" fill="#DCE4F2"/><rect x="8" y="1" width="3" height="1" fill="#DCE4F2"/><rect x="1" y="3" width="4" height="1" fill="#DCE4F2"/><rect x="6" y="3" width="3" height="1" fill="#DCE4F2"/><rect x="10" y="3" width="1" height="1" fill="#DCE4F2"/><rect x="1" y="9.5" width="4" height="1" fill="#DCE4F2"/><rect x="6" y="9.5" width="3" height="1" fill="#DCE4F2"/><rect x="10" y="9.5" width="1" height="1" fill="#DCE4F2"/><rect x="0" y="6" width="4" height="1.4" fill="#222"/><rect x="5.5" y="6" width="1.4" height="1.4" fill="#222"/><rect x="8" y="6" width="4" height="1.4" fill="#222"/></svg>
<svg style="left:133px;top:382px" width="18" height="18" viewBox="0 0 18 18">
<defs><radialGradient id="mv390" cx="0.45" cy="0.35" r="0.7"><stop offset="0" stop-color="#FFFFFF"/><stop offset="0.7" stop-color="#E6ECF8"/><stop offset="1" stop-color="#C8D2E6"/></radialGradient></defs>
<circle cx="9" cy="9.6" r="6.8" fill="rgba(0,0,0,0.10)"/>
<circle cx="8.5" cy="8.2" r="6.2" fill="url(#mv390)" stroke="#A0ACC4" stroke-width="1.3"/>
<g transform="translate(0.5 0.2)"><path d="M4.8 4.8 H11.2 V5.8 L8.6 8 L11.2 10.2 V11.2 H4.8 V10.2 L7.4 8 L4.8 5.8 Z" fill="#4A6AB8"/></g></svg>
<svg style="left:133px;top:404px" width="18" height="18" viewBox="0 0 18 18">
<defs><radialGradient id="mv412" cx="0.45" cy="0.35" r="0.7"><stop offset="0" stop-color="#FFFFFF"/><stop offset="0.7" stop-color="#E6ECF8"/><stop offset="1" stop-color="#C8D2E6"/></radialGradient></defs>
<circle cx="9" cy="9.6" r="6.8" fill="rgba(0,0,0,0.10)"/>
<circle cx="8.5" cy="8.2" r="6.2" fill="url(#mv412)" stroke="#A0ACC4" stroke-width="1.3"/>
<g transform="translate(0.5 0.2)"><path d="M8 5.5 L11 9.5 H5 Z" fill="#4A6AB8"/></g></svg>
<svg style="left:133px;top:426px" width="18" height="18" viewBox="0 0 18 18">
<defs><radialGradient id="mv434" cx="0.45" cy="0.35" r="0.7"><stop offset="0" stop-color="#FFFFFF"/><stop offset="0.7" stop-color="#E6ECF8"/><stop offset="1" stop-color="#C8D2E6"/></radialGradient></defs>
<circle cx="9" cy="9.6" r="6.8" fill="rgba(0,0,0,0.10)"/>
<circle cx="8.5" cy="8.2" r="6.2" fill="url(#mv434)" stroke="#A0ACC4" stroke-width="1.3"/>
<g transform="translate(0.5 0.2)"><path d="M8 10.5 L11 6.5 H5 Z" fill="#4A6AB8"/></g></svg>
<svg style="left:133px;top:448px" width="18" height="18" viewBox="0 0 18 18">
<defs><radialGradient id="mv456" cx="0.45" cy="0.35" r="0.7"><stop offset="0" stop-color="#FFFFFF"/><stop offset="0.7" stop-color="#E6ECF8"/><stop offset="1" stop-color="#C8D2E6"/></radialGradient></defs>
<circle cx="9" cy="9.6" r="6.8" fill="rgba(0,0,0,0.10)"/>
<circle cx="8.5" cy="8.2" r="6.2" fill="url(#mv456)" stroke="#A0ACC4" stroke-width="1.3"/>
<g transform="translate(0.5 0.2)"><path d="M4.8 4.8 H11.2 V5.8 L8.6 8 L11.2 10.2 V11.2 H4.8 V10.2 L7.4 8 L4.8 5.8 Z" fill="#4A6AB8"/></g></svg>
<div class="a" style="left:136px;top:480px;width:12px;height:12px;background:linear-gradient(135deg,#A8C0F0,#7898E0);border:1px solid #6A88D0"></div>
<div id="status" class="a"></div>
<div class="a" style="left:13px;top:515px;white-space:nowrap">Complete downloads: 0 of 45 - Current speed: 0 bytes/s</div>
<div class="a" style="left:572px;top:512px;width:1px;height:18px;background:#D0CDBE;box-shadow:1px 0 0 #fff"></div>
<svg style="left:573px;top:512.5px" width="18" height="18" viewBox="0 0 18 18">
<defs><radialGradient id="hlp" cx="0.45" cy="0.4" r="0.7"><stop offset="0" stop-color="#5A8AD0"/><stop offset="1" stop-color="#2E5CA4"/></radialGradient></defs>
<circle cx="9" cy="8" r="7.4" fill="url(#hlp)" stroke="#1A3260" stroke-width="1.3"/>
<circle cx="9" cy="8" r="6.2" fill="none" stroke="#D8E6FA" stroke-width="0.9"/>
<path d="M6.9 6.3 Q6.9 4.2 9.1 4.2 Q11.3 4.2 11.3 6.1 Q11.3 7.3 10 8 Q9.1 8.5 9.1 9.8" fill="none" stroke="#fff" stroke-width="1.8"/>
<rect x="8.1" y="10.9" width="2" height="1.9" fill="#fff"/>
</svg>
<div class="a" style="left:595px;top:515px;transform:scaleX(0.93);transform-origin:0 0">Help!</div>
<div class="a" style="left:627px;top:512px;width:1px;height:18px;background:#D0CDBE;box-shadow:1px 0 0 #fff"></div>
<svg style="left:629px;top:512px" width="18" height="19" viewBox="0 0 18 19">
<path d="M3.2 14.6 L8.6 9" stroke="#D88450" stroke-width="5.6" stroke-linecap="round"/>
<path d="M3.2 14.6 L8.6 9" stroke="#F6AA78" stroke-width="4.2" stroke-linecap="round"/>
<path d="M9 8.8 L10.4 7.4" stroke="#6A6A6A" stroke-width="2.6"/>
<circle cx="12.6" cy="5.2" r="3.6" fill="#D4D6D8" stroke="#6A6A6A" stroke-width="1.1"/>
<path d="M12.6 5.2 L15.2 1.2 L17.5 3.6 Z" fill="#ECE9D8"/>
<path d="M12.2 5.4 L14.6 1.9 M12.4 5.6 L16.6 4.1" stroke="#6A6A6A" stroke-width="1.1"/>
</svg>
<div class="a" style="left:651px;top:515px;transform:scaleX(0.975);transform-origin:0 0">Preferences</div>
<div class="a" style="left:716px;top:512px;width:1px;height:18px;background:#D0CDBE;box-shadow:1px 0 0 #fff"></div>
<svg style="left:722px;top:519px" width="13" height="13" viewBox="0 0 13 13" shape-rendering="crispEdges">
<g fill="#B4AE98"><rect x="8" y="2" width="2" height="2"/><rect x="5" y="5" width="2" height="2"/><rect x="8" y="5" width="2" height="2"/><rect x="2" y="8" width="2" height="2"/><rect x="5" y="8" width="2" height="2"/><rect x="8" y="8" width="2" height="2"/></g>
<g fill="#FFFFFF"><rect x="10" y="4" width="1" height="1"/><rect x="7" y="7" width="1" height="1"/><rect x="10" y="7" width="1" height="1"/><rect x="4" y="10" width="1" height="1"/><rect x="7" y="10" width="1" height="1"/><rect x="10" y="10" width="1" height="1"/></g>
</svg>
<div id="bb" class="a"></div>
</body></html>
